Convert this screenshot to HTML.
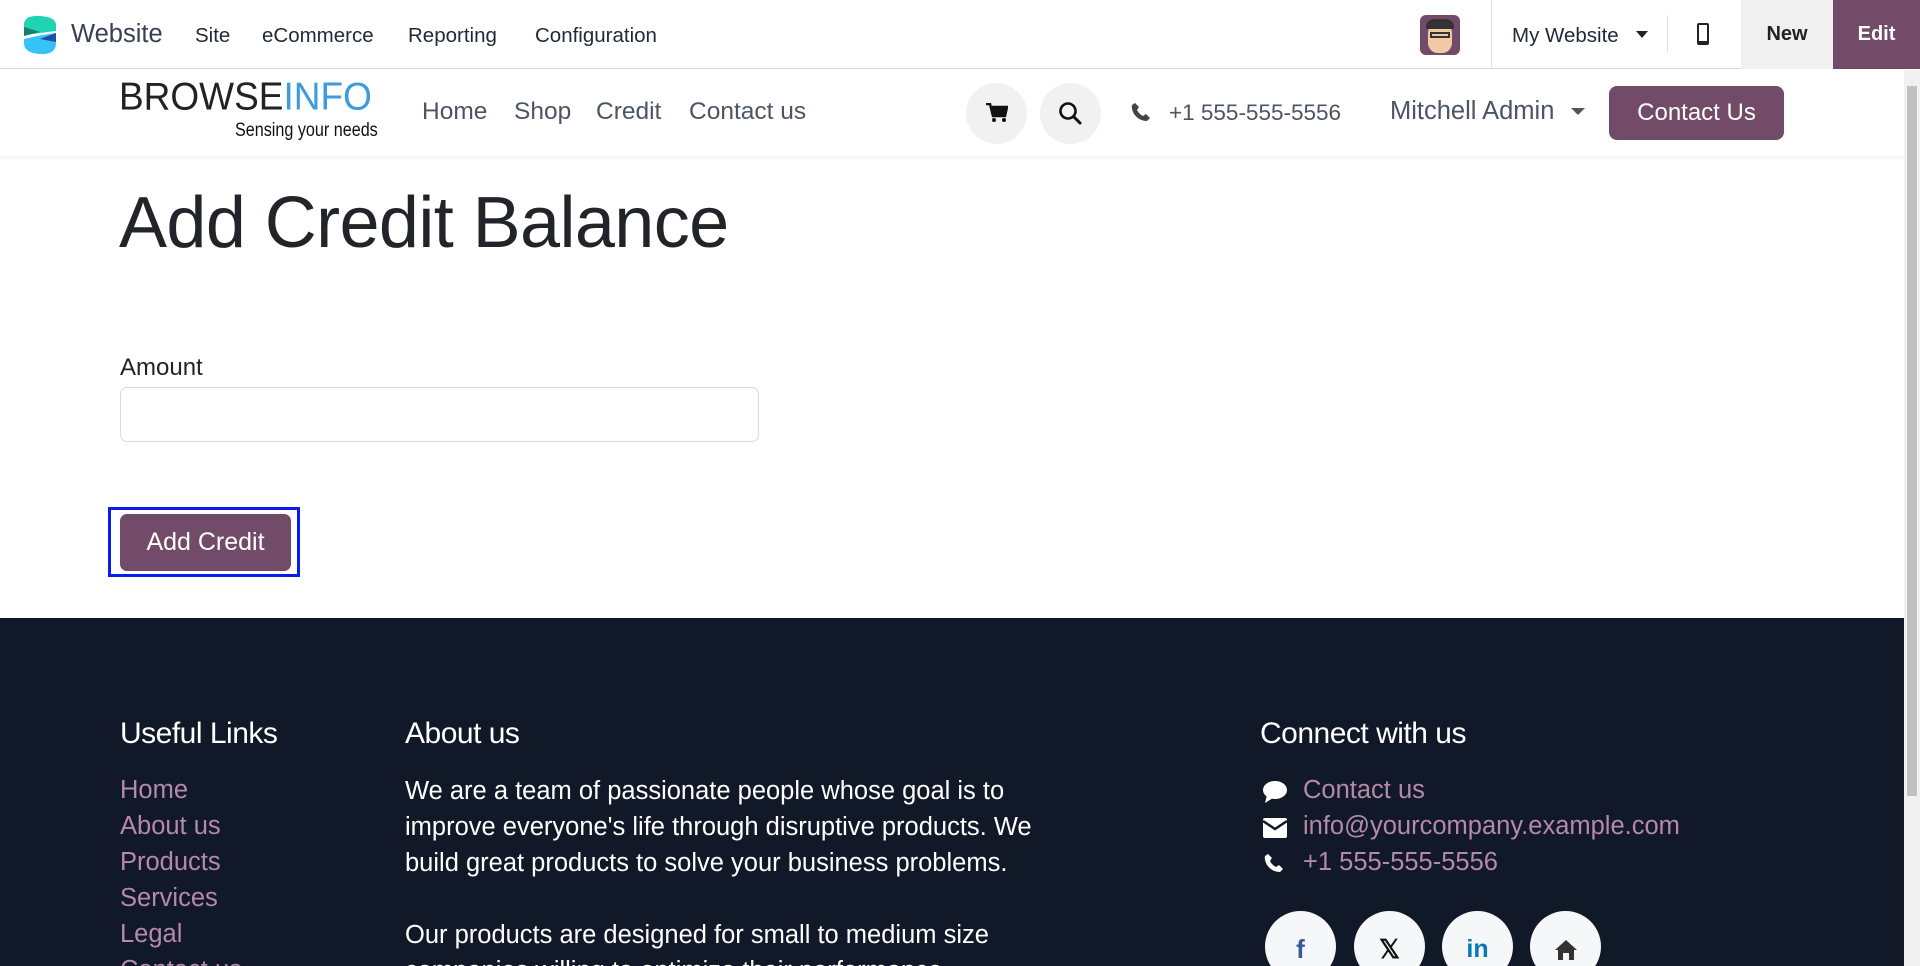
<!DOCTYPE html>
<html style="overflow:hidden;height:966px"><head><meta charset="utf-8"><style>
*{box-sizing:border-box;margin:0;padding:0}
body{width:1920px;height:966px;overflow:hidden;font-family:"Liberation Sans",sans-serif;background:#fff;position:relative;color:#212529}
.a{position:absolute;white-space:nowrap}
.top{position:absolute;left:0;top:0;width:1920px;height:69px;background:#fff;border-bottom:1px solid #d8d8d8}
.tm{font-size:20.5px;color:#1f2937;top:24px}
.nav{position:absolute;left:0;top:70px;width:1904px;height:86px;background:#fff;box-shadow:0 2px 4px rgba(0,0,0,.06)}
.nl{font-size:24.5px;color:#4b5563;top:98px}
.circ{position:absolute;width:61px;height:61px;border-radius:50%;background:#f1f1f1;top:83px}
footer{position:absolute;left:0;top:618px;width:1904px;height:348px;background:#111827}
.fh{font-size:30px;color:#fff;top:717px;letter-spacing:-0.5px}
.fl{font-size:25.5px;color:#b48aa8}
.ft{font-size:25.5px;color:#fff}
.soc{position:absolute;top:911px;width:71px;height:71px;border-radius:50%;background:#f6f7f9;display:flex;align-items:center;justify-content:center}
</style></head><body>
<div class="top"></div>
<svg class="a" style="left:20px;top:15px" width="40" height="40" viewBox="0 0 40 40">
<path d="M4 10 Q4 0 20 1 Q36 2 36 10 L36 16 L4 20 Z" fill="#1fd3b3"/>
<path d="M4 12 L20 17 L4 21 Z" fill="#1c7d6b"/>
<path d="M4 24 Q20 20 36 18 L36 28 Q36 40 20 39 Q4 38 4 28 Z" fill="#35c2f5"/>
<path d="M36 18 L20 24 L36 27 Z" fill="#1e4fa8"/>
</svg>
<div class="a" style="left:71px;top:20px;font-size:25.5px;color:#374151">Website</div>
<div class="a tm" style="left:195px">Site</div>
<div class="a tm" style="left:262px">eCommerce</div>
<div class="a tm" style="left:408px">Reporting</div>
<div class="a tm" style="left:535px">Configuration</div>
<div class="a" style="left:1420px;top:15px;width:40px;height:40px;border-radius:6px;background:#714b67;overflow:hidden">
<div style="position:absolute;left:8px;top:8px;width:24px;height:30px;border-radius:10px;background:#f3c9a3"></div>
<div style="position:absolute;left:6px;top:4px;width:28px;height:10px;border-radius:8px 8px 2px 2px;background:#333"></div>
<div style="position:absolute;left:10px;top:17px;width:20px;height:6px;border:2px solid #333"></div>
</div>
<div class="a" style="left:1491px;top:0;width:1px;height:69px;background:#e0e0e0"></div>
<div class="a tm" style="left:1512px">My Website</div>
<div class="a" style="left:1636px;top:31px;border-left:6px solid transparent;border-right:6px solid transparent;border-top:7px solid #222"></div>
<div class="a" style="left:1667px;top:15px;width:1px;height:38px;background:#e0e0e0"></div>
<div class="a" style="left:1697px;top:23px;width:12px;height:22px;border:2px solid #222;border-radius:2px;border-bottom-width:4px"></div>
<div class="a" style="left:1741px;top:0;width:92px;height:69px;background:#f0f0f0;font-size:20px;font-weight:bold;color:#222;text-align:center;line-height:69px">New</div>
<div class="a" style="left:1833px;top:0;width:87px;height:69px;background:#714b67;font-size:20px;font-weight:bold;color:#fff;text-align:center;line-height:69px">Edit</div>

<div class="nav"></div>
<div class="a" style="left:1904px;top:70px;width:16px;height:896px;background:#f1f1f1"></div>
<div class="a" style="left:1907px;top:86px;width:10px;height:710px;background:#c1c1c1"></div>
<div class="a" style="left:119px;top:76px;font-size:37px;color:#222;transform:scaleY(1.05)">BROWSE<span style="color:#3d9be0">INFO</span></div>
<div class="a" style="left:235px;top:120px;font-size:19px;color:#111;transform:scaleX(0.85);transform-origin:left">Sensing your needs</div>
<div class="a nl" style="left:422px">Home</div>
<div class="a nl" style="left:514px">Shop</div>
<div class="a nl" style="left:596px">Credit</div>
<div class="a nl" style="left:689px">Contact us</div>
<div class="circ" style="left:966px"></div>
<div class="circ" style="left:1040px"></div>
<svg class="a" style="left:986px;top:103px" width="22" height="20" viewBox="0 0 22 20"><path d="M0 1 H4 L7 13 H19 L21 4 H6" fill="none" stroke="#111" stroke-width="2.5"/><rect x="6" y="4" width="14" height="8" fill="#111"/><circle cx="8" cy="17" r="2" fill="#111"/><circle cx="18" cy="17" r="2" fill="#111"/></svg>
<svg class="a" style="left:1058px;top:101px" width="24" height="24" viewBox="0 0 24 24"><circle cx="10" cy="10" r="7.5" fill="none" stroke="#111" stroke-width="2.6"/><path d="M15.5 15.5 L22 22" stroke="#111" stroke-width="3" stroke-linecap="round"/></svg>
<svg class="a" style="left:1131px;top:102px" width="20" height="20" viewBox="0 0 20 20"><path d="M4 1 L8 5 L6 8 Q8 12 12 14 L15 12 L19 16 L16 19 Q8 19 3 12 Q0 6 1 3 Z" fill="#444"/></svg>
<div class="a" style="left:1169px;top:100px;font-size:22.5px;color:#4b5563">+1 555-555-5556</div>
<div class="a nl" style="left:1390px;font-size:25.5px;top:97px">Mitchell Admin</div>
<div class="a" style="left:1571px;top:108px;border-left:7px solid transparent;border-right:7px solid transparent;border-top:7px solid #555"></div>
<div class="a" style="left:1609px;top:86px;width:175px;height:54px;border-radius:8px;background:#714b67;color:#fff;font-size:24px;text-align:center;line-height:54px">Contact Us</div>

<div class="a" style="left:119px;top:182px;font-size:72px;color:#212529;letter-spacing:-0.6px">Add Credit Balance</div>
<div class="a" style="left:120px;top:354px;font-size:24px;color:#212529">Amount</div>
<div class="a" style="left:120px;top:387px;width:639px;height:55px;border:1px solid #d8dadd;border-radius:7px"></div>
<div class="a" style="left:108px;top:507px;width:192px;height:70px;border:3px solid #0a1bf0"></div>
<div class="a" style="left:120px;top:514px;width:171px;height:57px;border-radius:7px;background:#714b67;color:#fff;font-size:25px;text-align:center;line-height:57px">Add Credit</div>

<footer></footer>
<div class="a fh" style="left:120px">Useful Links</div>
<div class="a fh" style="left:405px">About us</div>
<div class="a fh" style="left:1260px">Connect with us</div>
<div class="a fl" style="left:120px;top:776px">Home</div>
<div class="a fl" style="left:120px;top:812px">About us</div>
<div class="a fl" style="left:120px;top:848px">Products</div>
<div class="a fl" style="left:120px;top:884px">Services</div>
<div class="a fl" style="left:120px;top:920px">Legal</div>
<div class="a fl" style="left:120px;top:956px">Contact us</div>
<div class="a ft" style="left:405px;top:773px;line-height:36px">We are a team of passionate people whose goal is to<br>improve everyone's life through disruptive products. We<br>build great products to solve your business problems.<br><br>Our products are designed for small to medium size<br>companies willing to optimize their performance.</div>
<svg class="a" style="left:1262px;top:780px" width="26" height="24" viewBox="0 0 26 24"><ellipse cx="13" cy="10" rx="12" ry="9" fill="#fff"/><path d="M5 15 L3 23 L11 18 Z" fill="#fff"/></svg>
<svg class="a" style="left:1263px;top:818px" width="24" height="20" viewBox="0 0 24 20"><rect x="0" y="0" width="24" height="20" rx="2" fill="#fff"/><path d="M0 3 L12 11 L24 3" fill="none" stroke="#111827" stroke-width="2.5"/></svg>
<svg class="a" style="left:1264px;top:852px" width="20" height="22" viewBox="0 0 20 20"><path d="M4 1 L8 5 L6 8 Q8 12 12 14 L15 12 L19 16 L16 19 Q8 19 3 12 Q0 6 1 3 Z" fill="#fff"/></svg>
<div class="a fl" style="left:1303px;top:776px">Contact us</div>
<div class="a fl" style="left:1303px;top:812px">info@yourcompany.example.com</div>
<div class="a fl" style="left:1303px;top:848px">+1 555-555-5556</div>
<div class="soc" style="left:1265px"><span style="font-size:26px;font-weight:bold;color:#3b5998;margin-top:6px">f</span></div>
<div class="soc" style="left:1354px"><span style="font-size:26px;font-weight:bold;color:#111;margin-top:6px">𝕏</span></div>
<div class="soc" style="left:1442px"><span style="font-size:25px;font-weight:bold;color:#0a78b5;margin-top:6px">in</span></div>
<div class="soc" style="left:1530px"><svg width="24" height="22" viewBox="0 0 24 22" style="margin-top:6px"><path d="M12 1 L23 11 H20 V21 H15 V14 H9 V21 H4 V11 H1 Z" fill="#333"/></svg></div>
</body></html>
